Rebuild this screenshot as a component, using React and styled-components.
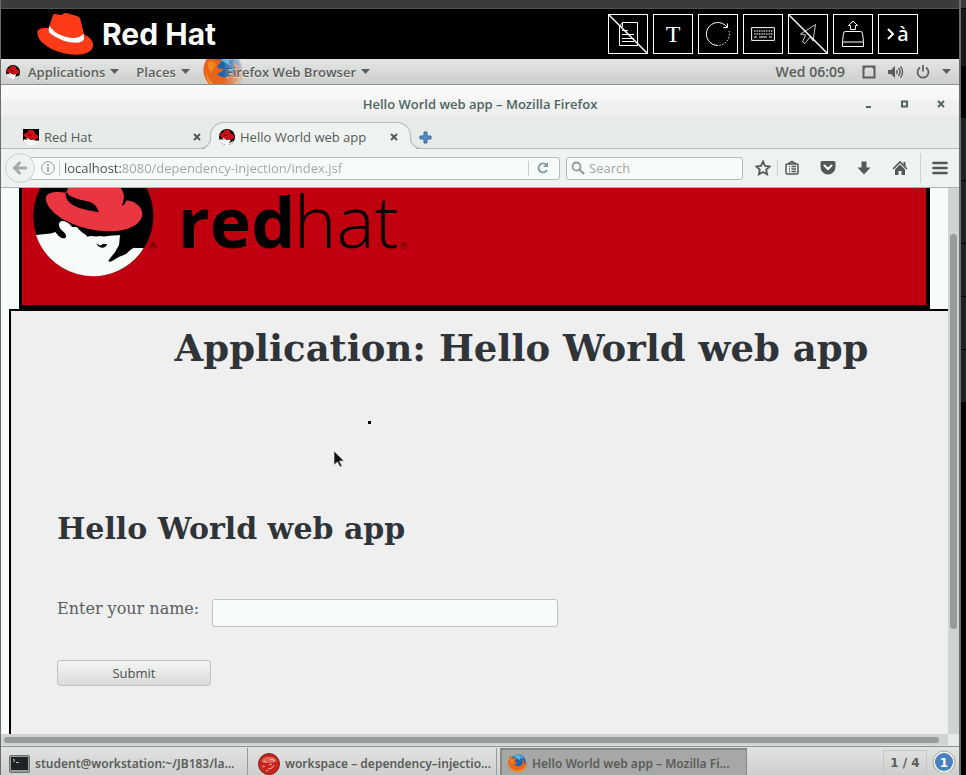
import React from "react";
import styled, { createGlobalStyle } from "styled-components";

const UI = `"Open Sans", "Noto Sans", sans-serif`;

const Global = createGlobalStyle`
  *, *::before, *::after { box-sizing: border-box; }
  body { margin: 0; background: #000; font-family: ${UI}; }
  button, input { font: inherit; color: inherit; margin: 0; padding: 0; }
  button { cursor: default; background: none; border: 0; }
  svg { display: block; flex: none; }
`;

const Desktop = styled.div`
  display: flex;
  height: 100vh;
  min-height: 640px;
  overflow: hidden;
`;

const Screen = styled.div`
  flex: 1;
  min-width: 0;
  display: flex;
  flex-direction: column;
  border-left: 1px solid #6b6b6b;
  border-right: 2px solid #6a6d6a;
`;

const Edge = styled.aside`
  width: 5px;
  display: flex;
  flex-direction: column;
  background: #000;
`;

const EdgeCell = styled.div`
  height: ${(p) => p.$h}px;
  background: ${(p) => p.$bg || "#1e2226"};
  border-bottom: 1px solid #000;
`;

const TopStrip = styled.div`
  flex: none;
  height: 9px;
  background: #3b3b3b;
  border-bottom: 1px solid #505050;
`;

const ConsoleBar = styled.header`
  flex: none;
  height: 50px;
  display: flex;
  align-items: center;
  justify-content: space-between;
  padding: 0 41px 0 35px;
  background: #000;
`;

const Brand = styled.div`
  display: flex;
  align-items: center;
  gap: 8px;
  color: #fff;
  font: 700 30px/40px Inter, sans-serif;
`;

const Tools = styled.div`
  display: flex;
  gap: 5px;
`;

const ToolButton = styled.button`
  width: 40px;
  height: 40px;
  border: 1px solid #fff;
  color: #fff;
  display: flex;
  align-items: center;
  justify-content: center;
  gap: 3px;
  font: ${(p) => p.$font || "inherit"};
`;

const Panel = styled.nav`
  flex: none;
  height: 26px;
  display: flex;
  align-items: center;
  color: #5a5d5b;
  background: linear-gradient(#e4e6e4, #cbcecb);
  border-bottom: 1px solid #8c908d;
  padding: 0 8px 0 5px;
  font-size: 13px;
  font-weight: 600;
`;

const PanelMenu = styled.button`
  position: relative;
  display: flex;
  align-items: center;
  gap: 5px;
  height: 25px;
  margin-left: ${(p) => p.$gap}px;
  text-shadow: 0 1px 0 #eceeec;
  white-space: nowrap;
`;

const AppIcon = styled.span`
  position: absolute;
  left: -23px;
  top: 0;
  width: 44px;
  height: 25px;
  overflow: hidden;
  -webkit-mask-image: linear-gradient(90deg, #000 45%, transparent);
  mask-image: linear-gradient(90deg, #000 45%, transparent);
`;

const MenuText = styled.span`
  position: relative;
`;

const PanelStatus = styled.div`
  margin-left: auto;
  display: flex;
  align-items: center;
  gap: 12px;
`;

const Clock = styled.time`
  margin-right: 5px;
  font-size: 14px;
`;

const TitleBar = styled.div`
  flex: none;
  height: 31px;
  display: grid;
  grid-template-columns: 1fr auto 1fr;
  align-items: center;
  padding: 6px 10px 0 10px;
  color: #4f6466;
  background: linear-gradient(#f8fcf9 0, #f8f6f7 15px, #eef3ef 15px, #efeeef 31px);
  font-size: 13px;
  font-weight: 600;
`;

const WindowButtons = styled.div`
  grid-column: 3;
  justify-self: end;
  display: flex;
  gap: 20px;
`;

const WindowTitle = styled.div`
  grid-column: 2;
`;

const IconButton = styled.button`
  display: grid;
  place-items: center;
  width: ${(p) => p.$w || 16}px;
  height: ${(p) => p.$w || 16}px;
  flex: none;
  color: ${(p) => p.$color || "#555855"};
`;

const TabStrip = styled.div`
  flex: none;
  height: 33px;
  display: flex;
  align-items: flex-end;
  padding-left: 11px;
  color: #555a5a;
  background: #e6ebe7;
  box-shadow: inset 0 -1px 0 #b7bab7;
  font-size: 13px;
`;

const Tab = styled.div`
  position: relative;
  display: flex;
  align-items: center;
  gap: 5px;
  width: ${(p) => (p.$active ? 201 : 198)}px;
  height: 27px;
  padding: 2px ${(p) => (p.$active ? "8px 0 8px" : "5px 0 11px")};
  white-space: nowrap;
  ${(p) =>
    p.$active &&
    `
    background: #eff3ef;
    border: 1px solid #b7babc;
    border-bottom: 0;
    border-radius: 14px 14px 0 0;
    &::before, &::after {
      content: "";
      position: absolute;
      bottom: 0;
      width: 11px;
      height: 12px;
      border-bottom: 1px solid #b7babc;
    }
    &::before {
      left: -11px;
      border-right: 1px solid #b7babc;
      border-bottom-right-radius: 11px;
      box-shadow: 4px 4px 0 -1px #eff3ef;
    }
    &::after {
      right: -11px;
      border-left: 1px solid #b7babc;
      border-bottom-left-radius: 11px;
      box-shadow: -4px 4px 0 -1px #eff3ef;
    }
  `}
`;

const TabLabel = styled.span`
  flex: 1;
`;

const NewTab = styled(IconButton)`
  margin: 0 0 4px 6px;
`;

const NavBar = styled.div`
  flex: none;
  height: 39px;
  display: flex;
  align-items: center;
  padding: 0 11px 0 4px;
  background: #eff3ef;
  border-bottom: 1px solid #aeb2af;
  color: #555855;
  font-size: 13px;
`;

const BackButton = styled.button`
  position: relative;
  flex: none;
  width: 30px;
  height: 30px;
  display: grid;
  place-items: center;
  border: 1px solid #ccd0cd;
  border-radius: 50%;
  background: #eff3ef;
  color: #a7aaa7;
`;

const Field = styled.div`
  display: flex;
  align-items: center;
  height: 23px;
  border: 1px solid #b7bab7;
  border-radius: 3px;
  background: #f8fcf9;
`;

const AddressField = styled(Field)`
  flex: 1;
  min-width: 0;
  margin: 0 6px 0 -6px;
  padding: 0 6px 0 11px;
  gap: 4px;
`;

const SearchField = styled(Field)`
  width: 177px;
  padding: 0 4px;
  gap: 4px;
`;

const TextInput = styled.input`
  flex: 1;
  min-width: 0;
  height: 20px;
  border: 0;
  outline: 0;
  background: transparent;
  &::placeholder { color: #a3a6a3; opacity: 1; }
`;

const AddressInput = styled(TextInput)`
  color: transparent;
  background: linear-gradient(90deg, #444b4c 57px, #a0a3a0 57px);
  -webkit-background-clip: text;
  background-clip: text;
`;

const Divider = styled.span`
  flex: none;
  width: 1px;
  height: ${(p) => p.$h}px;
  background: #ced2cf;
`;

const Actions = styled.div`
  display: flex;
  align-items: center;
  gap: 6px;
  margin-left: 12px;
`;

const ActionRow = styled.div`
  display: flex;
  gap: 20px;
  margin: 0 6px 0 0;
`;

const MenuButton = styled(IconButton)`
  margin-left: 5px;
`;

const Browser = styled.div`
  flex: 1;
  min-height: 0;
  display: grid;
  grid-template-columns: 1fr 11px;
  grid-template-rows: 1fr 12px;
  background: #d0d4d1;
`;

const Page = styled.main`
  overflow: hidden;
  display: flex;
  flex-direction: column;
  background: #f8fcf9;
  color: #2f3439;
  font-family: "DejaVu Serif", serif;
`;

const Banner = styled.div`
  flex: none;
  height: 121px;
  margin: 0 18px;
  display: flex;
  align-items: flex-start;
  background: #c1000f;
  border: solid #000;
  border-width: 0 4px 4px 3px;
`;

const Content = styled.section`
  flex: 1;
  margin-left: 8px;
  padding: 0 0 0 46px;
  background: #efefef;
  border: solid #000;
  border-width: 2px 0 0 2px;
`;

const H1 = styled.h1`
  margin: 14px 0 47px 38px;
  text-align: center;
  font-size: 37px;
  line-height: 46px;
  white-space: nowrap;
`;

const Marks = styled.div`
  height: 76px;
  padding-left: 277px;
`;

const H2 = styled.h2`
  margin: 16px 0 51px;
  font-size: 30px;
  line-height: 38px;
`;

const FormRow = styled.div`
  display: flex;
  align-items: flex-start;
  gap: 16px;
  margin-bottom: 33px;
  font-size: 16px;
  line-height: 20px;
  color: #5a5e60;
`;

const NameLabel = styled.label`
  width: 139px;
  white-space: nowrap;
`;

const NameInput = styled.input`
  width: 346px;
  height: 28px;
  border: 1px solid #bfc3c0;
  border-radius: 3px;
  background: #f8fcf9;
`;

const Submit = styled.button`
  display: block;
  width: 154px;
  height: 26px;
  border: 1px solid #bfc3c0;
  border-radius: 3px;
  background: linear-gradient(#f3f6f3, #d9dbd9);
  color: #4b4f52;
  font: 13px/24px ${UI};
`;

const VTrack = styled.div`
  padding: 46px 2px 105px;
  display: flex;
`;

const HTrack = styled.div`
  padding: 3px 9px 2px 3px;
  display: flex;
  border-bottom: 1px solid #e0e4e1;
`;

const Thumb = styled.div`
  flex: 1;
  border-radius: 4px;
  background: #979c98;
`;

const Corner = styled.div`
  background: #e6ebe7;
`;

const TaskBar = styled.footer`
  flex: none;
  height: 29px;
  display: flex;
  align-items: stretch;
  padding: 1px 3px 0 0;
  color: #5a5d5b;
  background: linear-gradient(#e2e4e2, #cccfcc);
  border-top: 1px solid #8c908d;
  font: 600 12px "Noto Sans", sans-serif;
`;

const Task = styled.button`
  display: flex;
  align-items: center;
  gap: 5px;
  width: ${(p) => p.$w || 247}px;
  padding: 4px 4px 0 ${(p) => p.$left || 8}px;
  white-space: nowrap;
  border-right: 1px solid #989b98;
  ${(p) => p.$active && "background: #a6a8a6; margin-left: 3px; border: 1px solid #858885; border-width: 2px 1px 0 2px; padding: 2px 4px 0 6px;"}
`;

const Pager = styled.div`
  margin: 2px 5px 0 auto;
  width: 44px;
  display: grid;
  place-items: center;
  border: 1px solid #c4c7c4;
  border-bottom: 0;
  font: 700 12px "DejaVu Sans", sans-serif;
`;

const Pointer = styled.svg`
  position: absolute;
  left: 333px;
  top: 450px;
`;

const Caret = () => (
  <svg width="9" height="5" viewBox="0 0 9 5"><path d="M0 0h9L4.5 5z" fill="#5a5d5b" /></svg>
);

const Fedora = () => (
  <svg width="58" height="44" viewBox="108 36 174 132">
    <path fill="#ff3a17" d="M160 43C168 39 178 46 187 44C191 38 200 38 207 41L233 49C240 52 242 60 243 66L252 103C270 112 279 122 279 137C278 160 240 168 205 162C158 155 113 128 112 98C112 86 125 83 146 84Z" />
    <path fill="#fff" d="M149 78C144 89 146 97 152 101C175 118 202 128 230 128C245 128 252 122 252 115L250 101C240 114 225 115 210 113C180 108 160 96 149 78Z" />
  </svg>
);

const shadowHat =
  "M137 55C140 36 165 34 200 38C204 48 220 54 262 64C284 70 290 80 297 97C280 93 262 91 246 86C210 76 196 62 196 40C196 34 205 34 203 24L220 -20C240 -34 262 -12 280 -14C300 -32 330 -24 344 -8L362 24C370 35 373 45 371 56C370 66 366 72 366 77C373 77 375 68 380 61C410 65 428 84 427 105C420 140 370 160 300 152C220 145 140 100 137 55Z";
const shadowBand = "M196 38C197 62 212 76 246 86C262 91 280 93 297 97C290 80 284 70 262 64C220 54 206 48 203 38Z";
const shadowFace =
  "M108 165C125 162 150 164 166 156C175 168 182 176 194 175C203 170 196 160 188 153C174 142 173 126 186 123C202 122 210 135 218 142C226 140 231 140 234 145C240 155 256 162 262 170C275 165 285 172 300 168C318 172 334 164 361 166C356 180 362 195 350 207C346 218 334 228 325 242L330 246C345 240 355 230 370 226C385 220 385 210 402 203C410 206 420 202 431 205A180 180 0 0 1 108 165Z";

const ShadowmanArt = ({ hat }) => (
  <>
    <circle cx="280" cy="108" r="180" fill="#000" />
    <path d={shadowFace} fill="#f8fcf9" />
    <path d={shadowHat} fill={hat} />
    <path d={shadowBand} />
    <path d="M289 190c8 5 12 10 18 3 5-4 10 0 14-1-2 8-7 11-14 11-10 0-15-6-18-13z" />
  </>
);

const Favicon = ({ size, square }) => (
  <svg width={size} height={size} viewBox="100 -72 360 360">
    {square ? <path d="M100 -72h360v260h-360z" /> : <circle cx="280" cy="108" r="180" />}
    <path d={shadowFace} fill="#fff" />
    <path d="M110 60C120 20 180 30 200 0L225 -45C260 -60 330 -60 350 -20L375 40C430 50 450 90 435 130C400 180 300 170 220 140C150 115 110 90 110 60Z" fill="#cf0f18" />
    <path d="M200 45L290 85" stroke="#500" strokeWidth="18" />
  </svg>
);

const BannerLogo = () => (
  <svg width="402" height="100" viewBox="0 0 402 100" role="img" aria-label="redhat">
    <svg x="0" y="0" width="134" height="92" viewBox="66 24 402 276">
      <ShadowmanArt hat="#e93640" />
    </svg>
    <g fontFamily="Open Sans, sans-serif">
      <text x="156" y="60" fontSize="70" fontWeight="700">red</text>
      <text x="272" y="60" fontSize="72" fontWeight="300">hat</text>
      <text x="127" y="61" fontSize="9" fill="#4a0006">®</text>
      <text x="378" y="61" fontSize="9" fill="#4a0006">®</text>
    </g>
  </svg>
);

const Firefox = ({ size }) => (
  <svg width={size} height={size} viewBox="0 0 40 40">
    <circle cx="21" cy="18" r="17" fill="#1c63ad" />
    <path d="M10 6C16 0 29 1 34 10C27 6 23 10 27 14C19 12 18 6 10 6Z" fill="#4fb4e4" />
    <path d="M3 9C3 6 5 4 6 3C6 7 9 8 11 8C14 8 17 9 18 9C18 12 15 13 14 15C14 17 17 18 20 17C19 21 15 21 14 22C17 27 25 27 29 22C32 18 31 13 29 10C35 13 36 19 34 24C37 21 38 17 37 12C41 21 39 30 32 35C22 42 8 38 3 28C-1 21 0 14 3 9Z" fill="#e8641b" />
    <path d="M3 20C5 31 13 36 22 35C31 34 36 28 36 21C39 29 32 38 21 38C10 38 3 30 3 20Z" fill="#f5a51f" />
    <path d="M6 10c3 0 5 2 7 3-1 2-4 4-4 8-4-2-5-7-3-11z" fill="#f38b1c" />
  </svg>
);

const Cross = () => (
  <svg width="8" height="8" viewBox="0 0 8 8"><path d="M1 1l6 6M7 1L1 7" stroke="currentColor" strokeWidth="2" /></svg>
);

const Slash = () => <path d="M0 0L40 40" stroke="#fff" strokeWidth="1.4" />;

const KeyIcon = () => {
  const keys = [];
  for (let r = 0; r < 2; r++) for (let c = 0; c < 8; c++) keys.push(<path key={`${r}${c}`} d={`M${3 + c * 2.4} ${4 + r * 3}h1.6`} />);
  return (
    <svg width="24" height="14" viewBox="0 0 24 14" fill="none" stroke="#fff" strokeWidth="1.2">
      <path d="M.6.6h22.8v12.8H.6z" strokeWidth="1" />
      {keys}
      <path d="M3 10h3M8 10h8M18 10h3" />
    </svg>
  );
};

export default function App() {
  return (
    <Desktop>
      <Global />
      <Screen>
        <TopStrip />
        <ConsoleBar>
          <Brand><Fedora />Red Hat</Brand>
          <Tools>
            <ToolButton aria-label="Clipboard">
              <svg width="38" height="38" viewBox="1 1 38 38" fill="none" stroke="#fff">
                <path d="M14.500 8.500H29.500V31.500H11.500V12.500zM14.500 8.500V12.500H11.500" />
                <path d="M14 16.500H20M14 20.500H26M14 24.500H26M14 27.500H26" />
                <Slash />
              </svg>
            </ToolButton>
            <ToolButton aria-label="Text" $font={'24px/38px "Liberation Serif", serif'}>T</ToolButton>
            <ToolButton aria-label="Refresh">
              <svg width="26" height="26" viewBox="0 0 26 26" fill="none" stroke="#fff">
                <path d="M13 24.500A11.500 11.500 0 1 1 22 6" />
                <path d="M24 10A11.500 11.500 0 0 1 13 24.500" strokeDasharray="1.500 1.500" />
                <path d="M18.500 6.500h4v-4" />
              </svg>
            </ToolButton>
            <ToolButton aria-label="Keyboard"><KeyIcon /></ToolButton>
            <ToolButton aria-label="Pointer">
              <svg width="38" height="38" viewBox="1 1 38 38" fill="none" stroke="#fff">
                <path d="M27.500 10.500L12.500 20l5 1-3 7 2.500 1.500 5-6.500 3 4z" stroke="#c8c8c8" />
                <Slash />
              </svg>
            </ToolButton>
            <ToolButton aria-label="Eject">
              <svg width="24" height="28" viewBox="0 0 24 28" fill="none" stroke="#fff">
                <path d="M12 1L7.500 5.500h2v4h5v-4h2zM4.500 11.500h15q2 0 2 2l1 8v5h-21v-5l1-8q0-2 2-2zM1.500 22h21" />
              </svg>
            </ToolButton>
            <ToolButton aria-label="Input language" $font={'500 20px/36px "Noto Sans", sans-serif'}>
              <svg width="7" height="12" viewBox="0 0 7 12" fill="none" stroke="#fff" strokeWidth="2"><path d="M1 1l5 5-5 5" /></svg>
              à
            </ToolButton>
          </Tools>
        </ConsoleBar>

        <Panel>
          <Favicon size={14} />
          <PanelMenu $gap={8}>Applications <Caret /></PanelMenu>
          <PanelMenu $gap={17}>Places <Caret /></PanelMenu>
          <PanelMenu $gap={36}>
            <AppIcon><svg width="44" height="25" viewBox="0 8 44 25"><Firefox size={41} /></svg></AppIcon>
            <MenuText>Firefox Web Browser</MenuText> <Caret />
          </PanelMenu>
          <PanelStatus>
            <Clock>Wed 06:09</Clock>
            <svg width="14" height="14" viewBox="0 0 14 14" fill="none" stroke="#5a5d5b" strokeWidth="2"><path d="M1.500 1.500h11v11h-11z" /><path d="M2 4l2-2M12 4l-2-2" strokeWidth="1" /></svg>
            <svg width="16" height="14" viewBox="0 0 16 14" fill="none" stroke="#5a5d5b" strokeWidth="1.4"><path d="M0 5h3l4-4v12l-4-4H0z" fill="#5a5d5b" stroke="none" /><path d="M8.500 5q1.500 2 0 4M10.500 3q3 4 0 8M12.500 1.500q4 5.500 0 11" /></svg>
            <svg width="14" height="14" viewBox="0 0 14 14" fill="none" stroke="#5a5d5b" strokeWidth="1.7"><path d="M4 2.500a5.500 5.500 0 1 0 6 0M7 0v6.500" /></svg>
            <Caret />
          </PanelStatus>
        </Panel>

        <TitleBar>
          <WindowTitle>Hello World web app – Mozilla Firefox</WindowTitle>
          <WindowButtons>
            <IconButton aria-label="Minimize" $color="#4f6466"><svg width="8" height="8" viewBox="0 0 8 8"><path d="M1 6h5v2H1z" fill="currentColor" /></svg></IconButton>
            <IconButton aria-label="Maximize" $color="#4f6466"><svg width="8" height="8" viewBox="0 0 8 8"><path d="M1 1.500h5v5H1z" fill="none" stroke="currentColor" strokeWidth="2" /></svg></IconButton>
            <IconButton aria-label="Close" $color="#4f6466"><Cross /></IconButton>
          </WindowButtons>
        </TitleBar>

        <TabStrip>
          <Tab>
            <Favicon size={16} square />
            <TabLabel>Red Hat</TabLabel>
            <IconButton aria-label="Close tab"><Cross /></IconButton>
          </Tab>
          <Tab $active>
            <Favicon size={16} />
            <TabLabel>Hello World web app</TabLabel>
            <IconButton aria-label="Close tab"><Cross /></IconButton>
          </Tab>
          <NewTab aria-label="New tab">
            <svg width="13" height="13" viewBox="0 0 13 13"><path d="M5 1h3v4h4v3H8v4H5V8H1V5h4z" fill="#5c8cc4" stroke="#3566a2" /></svg>
          </NewTab>
        </TabStrip>

        <NavBar>
          <BackButton aria-label="Back">
            <svg width="16" height="16" viewBox="0 0 16 16" fill="none" stroke="currentColor" strokeWidth="3"><path d="M8.500 2L2.500 8l6 6M3 8h12" /></svg>
          </BackButton>
          <AddressField>
            <svg width="14" height="14" viewBox="0 0 14 14" fill="none" stroke="#969a97"><circle cx="7" cy="7" r="6.300" /><path d="M7 3v2M7 6v5" strokeWidth="1.600" /></svg>
            <Divider $h={15} />
            <AddressInput aria-label="Address" defaultValue="localhost:8080/dependency-injection/index.jsf" />
            <Divider $h={15} />
            <IconButton aria-label="Reload" $w={20} $color="#7c98a8">
              <svg width="12" height="12" viewBox="0 0 12 12" fill="none" stroke="currentColor" strokeWidth="1.800"><path d="M9.500 3A4.500 4.500 0 1 0 10 8" /><path d="M11 0v5H6z" fill="currentColor" stroke="none" /></svg>
            </IconButton>
          </AddressField>
          <SearchField>
            <svg width="14" height="14" viewBox="0 0 14 14" fill="none" stroke="#969a97" strokeWidth="1.800"><circle cx="5.500" cy="5.500" r="4" /><path d="M8.500 8.500L13 13" strokeWidth="2.400" /></svg>
            <TextInput aria-label="Search" placeholder="Search" />
          </SearchField>
          <Actions>
            <IconButton aria-label="Bookmark"><svg width="16" height="16" viewBox="0 0 16 16" fill="none" stroke="currentColor" strokeWidth="1.800"><path d="M8 1.500l2 4.300 4.700.6-3.500 3.200.9 4.700L8 12l-4.100 2.300.9-4.700L1.300 6.400 6 5.800z" /></svg></IconButton>
            <Divider $h={17} />
            <ActionRow>
              <IconButton aria-label="Library"><svg width="16" height="16" viewBox="0 0 16 16" fill="none" stroke="currentColor" strokeWidth="1.500"><rect x="2" y="4" width="12" height="10" rx="1" /><path d="M4 4l4-2.500L12 4M5 6.500h1M7.500 6.500H12M5 9h1M7.500 9H12M5 11.500h1M7.500 11.500H12" /></svg></IconButton>
              <IconButton aria-label="Pocket"><svg width="16" height="16" viewBox="0 0 16 16"><path d="M2 1h12a1.500 1.500 0 0 1 1.500 1.500V7a7.500 7.500 0 0 1-15 0V2.500A1.500 1.500 0 0 1 2 1z" fill="currentColor" /><path d="M4.500 5.500L8 9l3.500-3.500" fill="none" stroke="#fff" strokeWidth="2" strokeLinecap="round" /></svg></IconButton>
              <IconButton aria-label="Downloads"><svg width="16" height="16" viewBox="0 0 16 16"><path d="M5.500 1.500h5V7.500H14.500L8 14.500 1.500 7.500h4z" fill="currentColor" /></svg></IconButton>
              <IconButton aria-label="Home"><svg width="16" height="16" viewBox="0 0 16 16"><path d="M1 9l7-7 7 7" fill="none" stroke="currentColor" strokeWidth="1.600" /><path d="M11.500 2h2v4h-2zM3 9.500l5-5 5 5V15H9.500v-4h-3v4H3z" fill="currentColor" /></svg></IconButton>
            </ActionRow>
            <Divider $h={30} />
            <MenuButton aria-label="Menu"><svg width="16" height="14" viewBox="0 0 16 14"><path d="M1.500 2h13M1.500 7h13M1.500 12h13" stroke="currentColor" strokeWidth="2.600" strokeLinecap="round" /></svg></MenuButton>
          </Actions>
        </NavBar>

        <Browser>
          <Page>
            <Banner><BannerLogo /></Banner>
            <Content>
              <H1>Application: Hello World web app</H1>
              <Marks>
                <svg width="50" height="16" viewBox="0 0 50 16"><path d="M34 3h3v3h-3z" /></svg>
              </Marks>
              <H2>Hello World web app</H2>
              <form onSubmit={(e) => e.preventDefault()}>
                <FormRow>
                  <NameLabel htmlFor="name">Enter your name:</NameLabel>
                  <NameInput id="name" type="text" />
                </FormRow>
                <Submit type="submit">Submit</Submit>
              </form>
            </Content>
          </Page>
          <VTrack><Thumb /></VTrack>
          <HTrack><Thumb /></HTrack>
          <Corner />
        </Browser>

        <TaskBar>
          <Task>
            <svg width="21" height="18" viewBox="0 0 21 18"><rect x=".5" y=".5" width="20" height="17" rx="1.500" fill="#9a9e9a" stroke="#6a6d6a" /><path d="M2 2h17v13H2z" fill="#1d2423" /><path d="M4 4l2 1.500L4 7M7 7.500h3" stroke="#dde" strokeWidth=".8" fill="none" /></svg>
            student@workstation:~/JB183/la...
          </Task>
          <Task $w={249} $left={10}>
            <svg width="22" height="22" viewBox="0 0 22 22"><circle cx="11" cy="11" r="10.500" fill="#c8251c" stroke="#80201c" /><path d="M3 8a9 8 0 0 1 16 0 12 8 0 0 1-16 0z" fill="#ef8a80" opacity=".6" /><path d="M5 9l2-1 1 2M12 7l3-1 1 3M4 14l2-1 1 1M11 12l3-1M10 16l4-1 2-3M8 18l2-1" fill="none" stroke="#fbd0ca" strokeWidth=".8" /></svg>
            workspace – dependency–injectio...
          </Task>
          <Task $active>
            <Firefox size={19} />
            Hello World web app – Mozilla Fi...
          </Task>
          <Pager>1 / 4</Pager>
          <IconButton aria-label="Notifications" $w={24}>
            <svg width="24" height="24" viewBox="0 0 24 24"><circle cx="12" cy="14" r="11" fill="#f1f3f1" stroke="#a5a8a5" /><circle cx="12" cy="14" r="9" fill="#4a7fc0" /><text x="12" y="19" textAnchor="middle" fill="#fff" fontFamily="DejaVu Sans" fontWeight="700" fontSize="12">1</text></svg>
          </IconButton>
        </TaskBar>
        <Pointer width="12" height="18" viewBox="0 0 12 18"><path d="M1 1v14l3.500-3 2.500 5 2-1-2.500-5H11z" fill="#111" stroke="#ddd" strokeWidth=".7" /></Pointer>
      </Screen>
      <Edge>
        <EdgeCell $h={9} $bg="#3b3b3b" />
        <EdgeCell $h={58} $bg="#17191b" />
        <EdgeCell $h={51} $bg="#000" />
        <EdgeCell $h={63} />
        <EdgeCell $h={63} />
        <EdgeCell $h={53} />
        <EdgeCell $h={53} />
        <EdgeCell $h={53} />
      </Edge>
    </Desktop>
  );
}
